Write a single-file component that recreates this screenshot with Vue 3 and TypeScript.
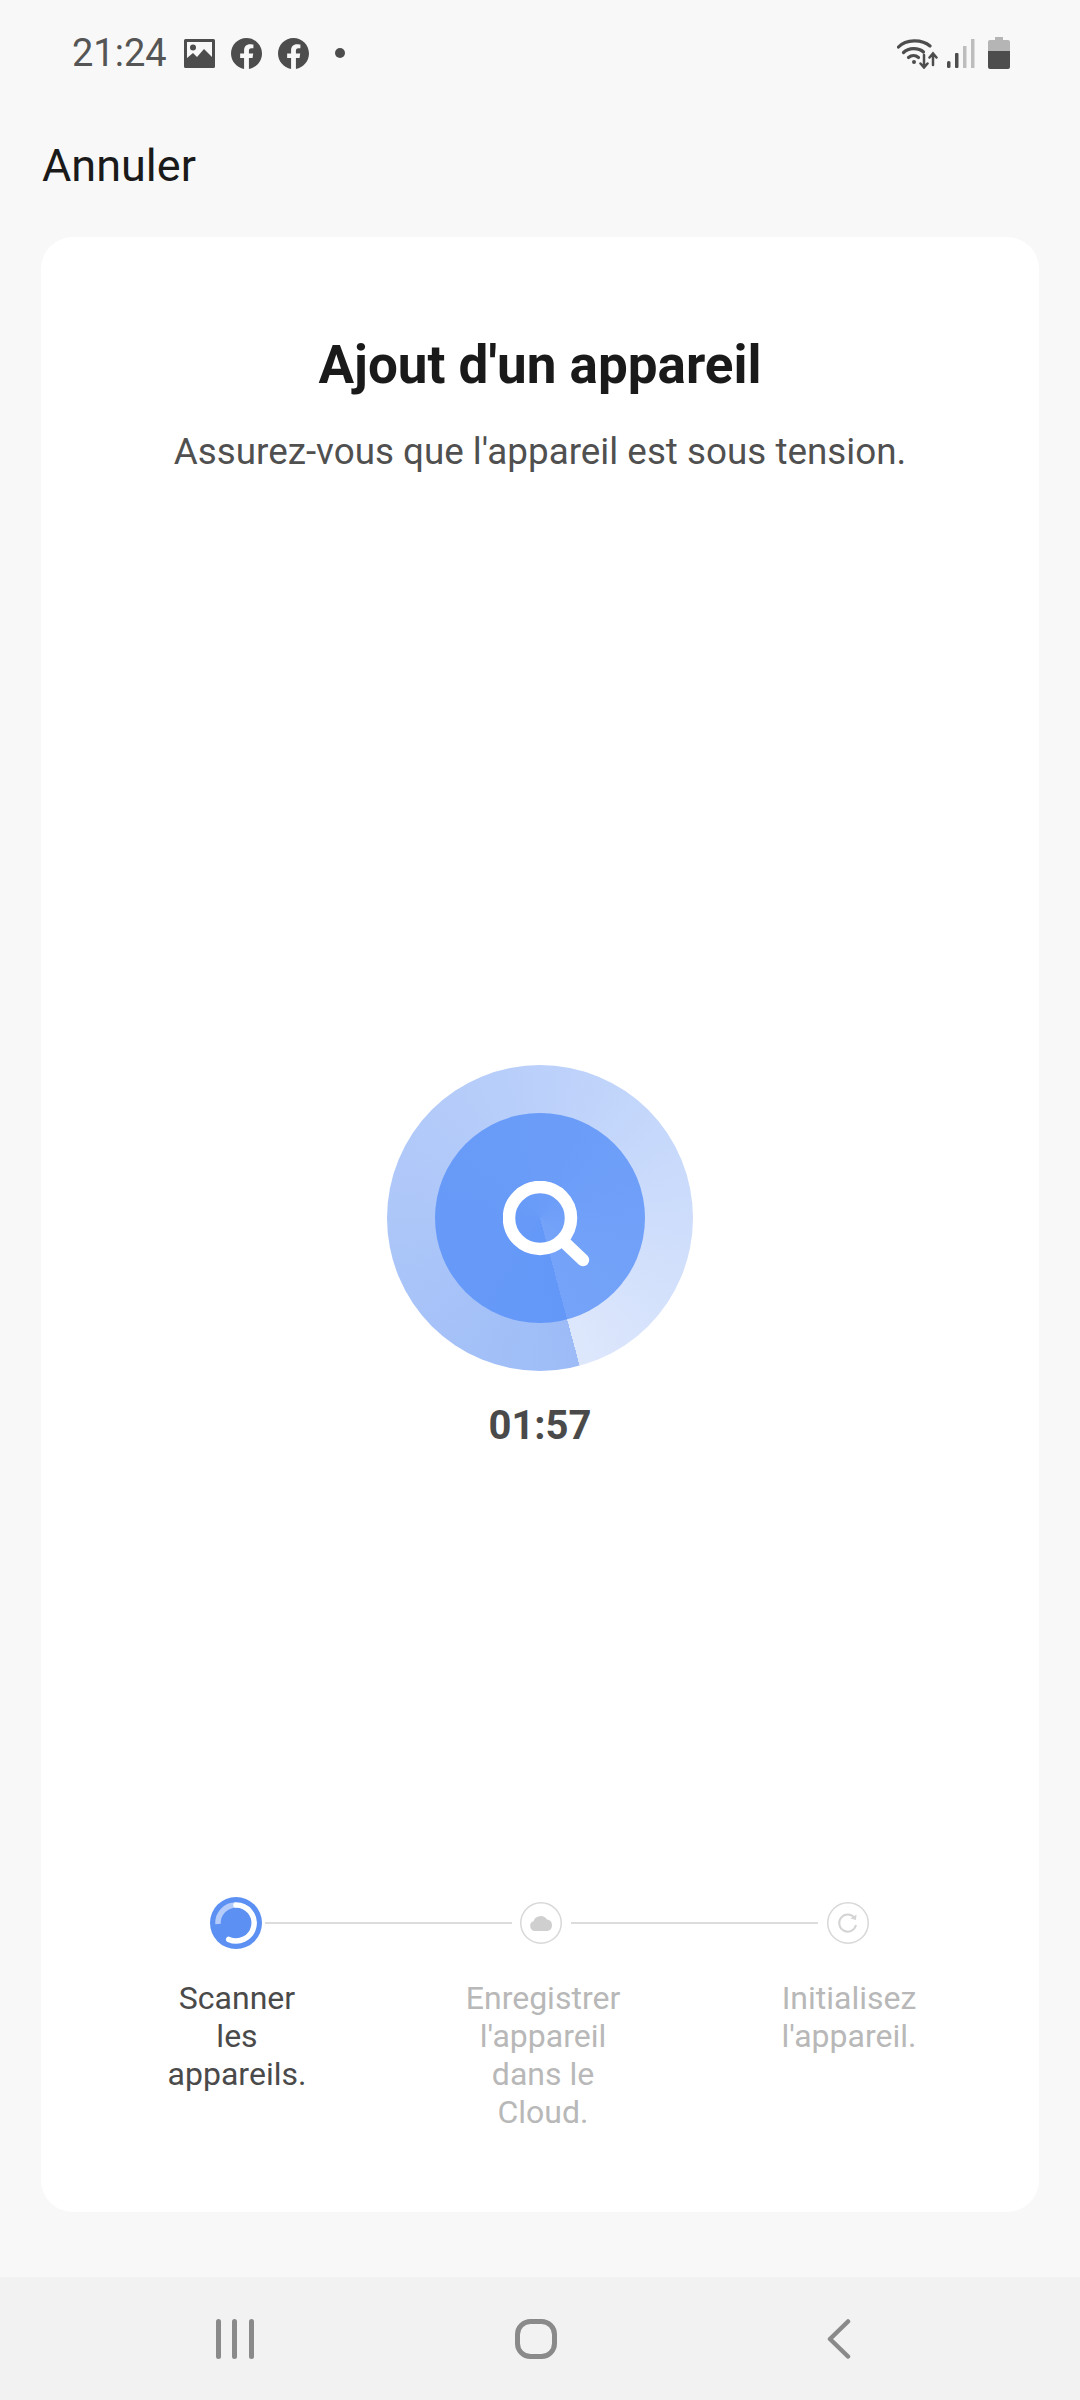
<template>
  <div class="page">
    <!-- status bar -->
    <div class="status-bar">
      <span class="time">21:24</span>
      <svg class="ic-image" width="31" height="29" viewBox="0 0 31 29">
        <path fill="#4d4d4d" fill-rule="evenodd" d="M0 1.5A1.5 1.5 0 0 1 1.5 0h28A1.5 1.5 0 0 1 31 1.5v26a1.5 1.5 0 0 1-1.500 1.500h-28A1.500 1.500 0 0 1 0 27.500zM3 3v16l6-5 4 4 7-8 8 8V3z" />
        <circle cx="9" cy="8.500" r="3" fill="#4d4d4d" />
      </svg>
      <svg v-for="n in 2" :key="n" class="ic-fb" width="31" height="31" viewBox="0 0 24 24">
        <path fill="#4d4d4d" d="M24 12.073c0-6.627-5.373-12-12-12s-12 5.373-12 12c0 5.990 4.388 10.954 10.125 11.854v-8.385H7.078v-3.470h3.047V9.430c0-3.007 1.792-4.669 4.533-4.669 1.312 0 2.686.235 2.686.235v2.953H15.830c-1.491 0-1.956.925-1.956 1.874v2.250h3.328l-.532 3.470h-2.796v8.385C19.612 23.027 24 18.062 24 12.073z" />
      </svg>
      <span class="dot"></span>
      <span class="spacer"></span>
      <svg width="41" height="31" viewBox="0 0 41 31" fill="none" stroke="#4d4d4d" stroke-linecap="round">
        <path stroke-width="3.200" d="M1.500 9C9 1 25 1 33 8" />
        <path stroke-width="3.200" d="M6.500 14.500c5-5 15-5 20-.5" />
        <path stroke-width="3.200" d="M11.500 19.500c3-2.500 7-2.500 10 0" />
        <circle cx="17" cy="24" r="2" fill="#4d4d4d" stroke="none" />
        <path stroke-width="2.500" d="M27 17v12M23.500 25.500 27 29.500l3.500-4M36 27V16M32.500 19.500 36 15.500l3.500 4" />
      </svg>
      <svg class="ic-signal" width="28" height="29" viewBox="0 0 28 29">
        <rect x="0" y="22" width="3.500" height="7" rx="1.500" fill="#4d4d4d" />
        <rect x="8" y="14" width="3.500" height="15" rx="1" fill="#4d4d4d" />
        <rect x="16" y="7" width="3.500" height="22" fill="#bdbdbd" />
        <rect x="24" y="0" width="3.500" height="29" fill="#bdbdbd" />
      </svg>
      <svg class="ic-battery" width="22" height="32" viewBox="0 0 22 32">
        <path fill="#b5b5b5" d="M7 0h8v3h5a2 2 0 0 1 2 2v10H0V5a2 2 0 0 1 2-2h5z" />
        <path fill="#4d4d4d" d="M0 14h22v16a2 2 0 0 1-2 2H2a2 2 0 0 1-2-2z" />
      </svg>
    </div>

    <div class="header">Annuler</div>

    <div class="card">
      <h1 class="title">Ajout d'un appareil</h1>
      <p class="subtitle">Assurez-vous que l'appareil est sous tension.</p>

      <div class="radar">
        <div class="radar-inner">
          <svg width="90" height="88" viewBox="0 0 90 88" fill="none" stroke="#fff" stroke-width="12.500" stroke-linecap="round">
            <circle cx="37" cy="37" r="31" />
            <path d="M60 60l20 19" />
          </svg>
        </div>
      </div>
      <div class="timer">01:57</div>

      <div class="track">
        <svg width="52" height="52" viewBox="0 0 52 52" fill="none">
          <circle cx="26" cy="26" r="26" fill="#5c91f3" />
          <path d="M8 27A18 18 0 0 1 26 8" stroke="#b5ccfa" stroke-width="5.500" />
          <path d="M26 8A18 18 0 1 1 18.700 42.400" stroke="#fff" stroke-width="5.500" stroke-linecap="round" />
        </svg>
        <span class="line"></span>
        <svg width="42" height="42" viewBox="0 0 42 42" fill="none">
          <circle cx="21" cy="21" r="20.250" stroke="#d8d8d8" stroke-width="1.500" />
          <path fill="#cfcfcf" d="M15 29a5 5 0 0 1-1.500-9.700A7.500 7.500 0 0 1 27 17.600 5.800 5.800 0 0 1 27.500 29z" />
        </svg>
        <span class="line"></span>
        <svg width="42" height="42" viewBox="0 0 42 42" fill="none">
          <circle cx="21" cy="21" r="20.250" stroke="#d8d8d8" stroke-width="1.500" />
          <path stroke="#d4d4d4" stroke-width="2" d="M27.500 16A8.500 8.500 0 1 0 29 23" />
          <path fill="#d4d4d4" d="M23.500 16.500 29 18l.5-5.500z" />
        </svg>
      </div>

      <div class="labels">
        <div v-for="(s, i) in steps" :key="s" class="label" :class="{ active: i === 0 }">{{ s }}</div>
      </div>
    </div>

    <div class="gap"></div>

    <!-- android nav -->
    <div class="nav">
      <svg width="38" height="40" viewBox="0 0 38 40" fill="#8a8a8a">
        <rect x="0" y="0" width="5" height="40" rx="2.500" />
        <rect x="16" y="0" width="5" height="40" rx="2.500" />
        <rect x="33" y="0" width="5" height="40" rx="2.500" />
      </svg>
      <svg class="nav-home" width="42" height="40" viewBox="0 0 42 40" fill="none">
        <rect x="2.500" y="2.500" width="37" height="35" rx="13" stroke="#8a8a8a" stroke-width="5" />
      </svg>
      <svg class="nav-back" width="24" height="40" viewBox="0 0 24 40" fill="none">
        <path d="M21 2.500 3 20l18 17.500" stroke="#8a8a8a" stroke-width="4.500" stroke-linecap="round" stroke-linejoin="round" />
      </svg>
    </div>
  </div>
</template>

<script setup lang="ts">
const steps: string[] = [
  'Scanner les appareils.',
  "Enregistrer l'appareil dans le Cloud.",
  "Initialisez l'appareil."
]
</script>

<style scoped>
* {
  box-sizing: border-box;
}

.page {
  width: 1080px;
  height: 2400px;
  display: flex;
  flex-direction: column;
  background: #f8f8f8;
  font-family: Roboto, "Liberation Sans", sans-serif;
  overflow: hidden;
}

/* status bar */
.status-bar {
  height: 106px;
  flex-shrink: 0;
  display: flex;
  align-items: center;
  padding: 0 70px 0 72px;
}

.time {
  font-size: 38px;
  color: #555;
  line-height: 1;
}

.ic-image {
  margin-left: 17px;
}

.ic-fb {
  margin-left: 16px;
}

.dot {
  width: 10px;
  height: 10px;
  border-radius: 50%;
  background: #4d4d4d;
  margin-left: 26px;
}

.spacer {
  flex: 1;
}

.ic-signal {
  margin-left: 9px;
}

.ic-battery {
  margin-left: 13px;
}

.header {
  height: 118px;
  margin-bottom: 13px;
  padding-left: 42px;
  flex-shrink: 0;
  display: flex;
  align-items: center;
  font-size: 45px;
  color: #1a1a1a;
}

/* main card */
.card {
  height: 1975px;
  margin: 0 41px;
  flex-shrink: 0;
  background: #fff;
  border-radius: 32px;
  padding-top: 100px;
  display: flex;
  flex-direction: column;
  align-items: center;
}

.title {
  margin: 0;
  font-size: 53px;
  line-height: 56px;
  font-weight: 700;
  color: #1a1a1a;
}

.subtitle {
  margin: 37px 0 0;
  font-size: 36.800px;
  line-height: 44px;
  color: #505050;
}

.radar {
  width: 306px;
  height: 306px;
  margin-top: 591px;
  flex-shrink: 0;
  border-radius: 50%;
  background: conic-gradient(from 165deg, #9dbcf7 0deg, #b8cefa 180deg, #c6d8fb 250deg, #dde7fc 360deg);
  display: flex;
  align-items: center;
  justify-content: center;
}

.radar-inner {
  width: 210px;
  height: 210px;
  border-radius: 50%;
  background: conic-gradient(from 165deg, #6498f8 0deg, #6a9cf8 200deg, #75a3f9 360deg);
  display: flex;
  align-items: center;
  justify-content: center;
  padding: 14px 0 0 16px;
}

.timer {
  margin-top: 33px;
  font-size: 40px;
  line-height: 44px;
  font-weight: 700;
  color: #4a4a4a;
}

.track {
  width: 659px;
  margin-top: 449px;
  margin-right: 1px;
  flex-shrink: 0;
  display: flex;
  align-items: center;
}

.line {
  flex: 1;
  height: 2px;
  margin: 0 9px;
  background: #dcdcdc;
}

.line:nth-of-type(1) {
  margin-left: 3px;
  margin-right: 8px;
}

.labels {
  width: 918px;
  margin-top: 30px;
  display: grid;
  grid-template-columns: repeat(3, 306px);
  justify-items: center;
  transform: translateX(3px);
}

.label {
  width: 160px;
  font-size: 32px;
  line-height: 38px;
  text-align: center;
  color: #b8b8b8;
}

.label.active {
  color: #4a4a4a;
}

.gap {
  flex: 1;
}

/* android nav */
.nav {
  height: 123px;
  flex-shrink: 0;
  background: #f2f2f2;
  display: flex;
  align-items: center;
  padding-left: 216px;
}

.nav-home {
  margin-left: 261px;
}

.nav-back {
  margin-left: 270px;
}
</style>

<style>
html,
body {
  margin: 0;
  background: #f8f8f8;
}
</style>
